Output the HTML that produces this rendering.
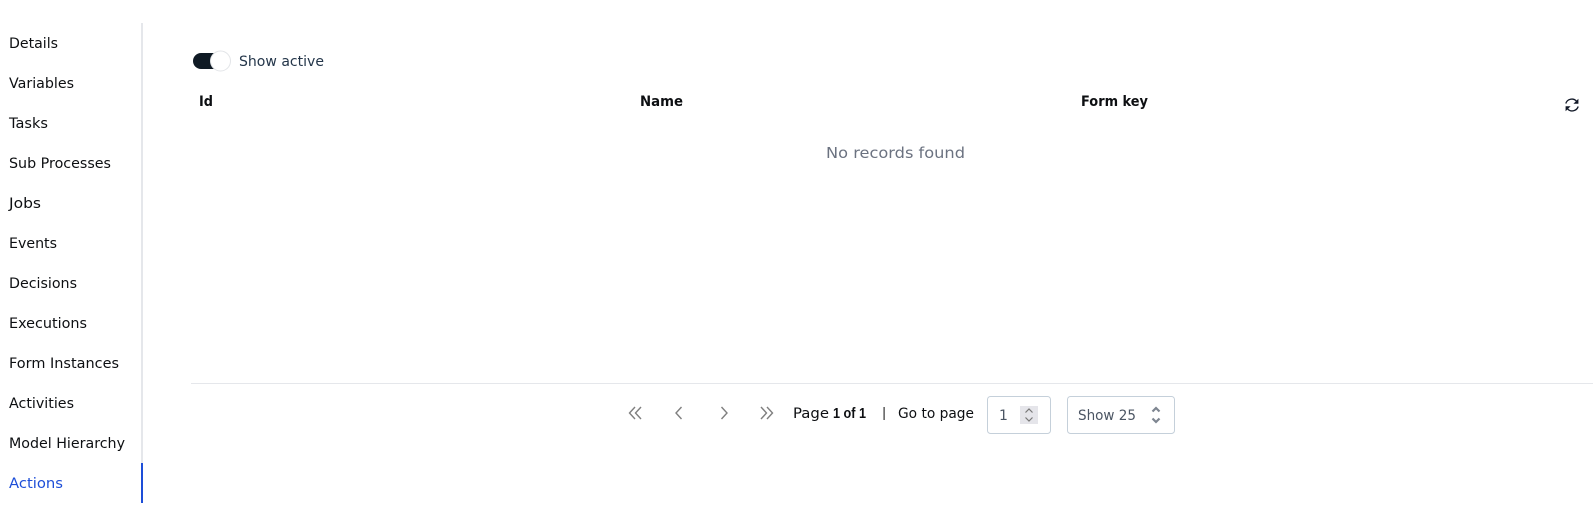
<!DOCTYPE html>
<html>
<head>
<meta charset="utf-8">
<style>
html,body{margin:0;padding:0;background:#fff;width:1593px;height:514px;overflow:hidden}
svg{display:block}
text{font-family:"DejaVu Sans","Liberation Sans",sans-serif;font-size:14px;fill:#0d0f12}
.b{font-weight:700}
.l{font-family:"Liberation Sans",sans-serif;font-size:15px}
</style>
</head>
<body>
<svg width="1593" height="514" viewBox="0 0 1593 514" xmlns="http://www.w3.org/2000/svg">
<rect x="141" y="23" width="2" height="440" fill="#e5e7eb"/>
<rect x="141" y="463" width="2" height="40" fill="#1d4ed8"/>
<text x="9" y="48" textLength="49" lengthAdjust="spacingAndGlyphs">Details</text>
<text x="9" y="88" textLength="65" lengthAdjust="spacingAndGlyphs">Variables</text>
<text x="9" y="128" textLength="39" lengthAdjust="spacingAndGlyphs">Tasks</text>
<text x="9" y="168" textLength="102" lengthAdjust="spacingAndGlyphs">Sub Processes</text>
<text x="9" y="208" textLength="32" lengthAdjust="spacingAndGlyphs">Jobs</text>
<text x="9" y="248" textLength="48" lengthAdjust="spacingAndGlyphs">Events</text>
<text x="9" y="288" textLength="68" lengthAdjust="spacingAndGlyphs">Decisions</text>
<text x="9" y="328" textLength="78" lengthAdjust="spacingAndGlyphs">Executions</text>
<text x="9" y="368" textLength="110" lengthAdjust="spacingAndGlyphs">Form Instances</text>
<text x="9" y="408" textLength="65" lengthAdjust="spacingAndGlyphs">Activities</text>
<text x="9" y="448" textLength="116" lengthAdjust="spacingAndGlyphs">Model Hierarchy</text>
<text x="9" y="488" textLength="54" lengthAdjust="spacingAndGlyphs" style="fill:#1d4ed8">Actions</text>

<rect x="193" y="53" width="34" height="16" rx="8" fill="#0f1a24"/>
<circle cx="220.500" cy="61" r="10" fill="#fff" stroke="#e3e5e8" stroke-width="1"/>
<text x="239" y="66" textLength="85" lengthAdjust="spacingAndGlyphs" style="fill:#24364a">Show active</text>

<text class="b" x="199" y="106" textLength="14" lengthAdjust="spacingAndGlyphs">Id</text>
<text class="b" x="640" y="106" textLength="43" lengthAdjust="spacingAndGlyphs">Name</text>
<text class="b" x="1081" y="106" textLength="67" lengthAdjust="spacingAndGlyphs">Form key</text>

<g fill="none" stroke="#111827" stroke-width="1.300">
<path d="M1565.800 103.500a6.300 6.300 0 0 1 10.600-2.400"/>
<path d="M1578.200 106.500a6.300 6.300 0 0 1-10.600 2.400"/>
</g>
<path d="M1578.400 98.800v5h-5z" fill="#111827"/>
<path d="M1565.600 111.200v-5h5z" fill="#111827"/>

<text x="826" y="158" textLength="139" lengthAdjust="spacingAndGlyphs" style="font-size:15.500px;fill:#6b7280">No records found</text>

<rect x="191" y="383" width="1402" height="1" fill="#e5e7eb"/>

<g fill="none" stroke="#7f7f7f" stroke-width="1.400">
<path d="M635 407l-5.500 6 5.500 6M641 407l-5.500 6 5.500 6"/>
<path d="M681.500 407l-5.500 6 5.500 6"/>
<path d="M721.500 407l5.500 6-5.500 6"/>
<path d="M761 407l5.500 6-5.500 6M767 407l5.500 6-5.500 6"/>
</g>

<text x="793" y="418" textLength="36" lengthAdjust="spacingAndGlyphs">Page</text>
<text class="b l" x="833" y="418" textLength="33" lengthAdjust="spacingAndGlyphs">1 of 1</text>
<rect x="883.500" y="407" width="1.200" height="13" fill="#333"/>
<text x="898" y="418" textLength="76" lengthAdjust="spacingAndGlyphs">Go to page</text>

<rect x="987.500" y="396.500" width="63" height="37" rx="3" fill="#fff" stroke="#c5d0da"/>
<text x="999" y="420" style="fill:#4b5563">1</text>
<rect x="1020" y="406" width="18" height="18" fill="#e5e5ea"/>
<g fill="none" stroke="#777" stroke-width="1.200">
<path d="M1025.500 412.500l3.500-3.500 3.500 3.500"/>
<path d="M1025.500 417.500l3.500 3.500 3.500-3.500"/>
</g>

<rect x="1067.500" y="396.500" width="107" height="37" rx="3" fill="#fff" stroke="#c5d0da"/>
<text x="1078" y="420" textLength="58" lengthAdjust="spacingAndGlyphs" style="fill:#4b5563">Show 25</text>
<g fill="none" stroke="#7d8590" stroke-width="2.200">
<path d="M1152.500 411.500l3.500-3.500 3.500 3.500"/>
<path d="M1152.500 418.500l3.500 3.500 3.500-3.500"/>
</g>
</svg>
</body>
</html>
